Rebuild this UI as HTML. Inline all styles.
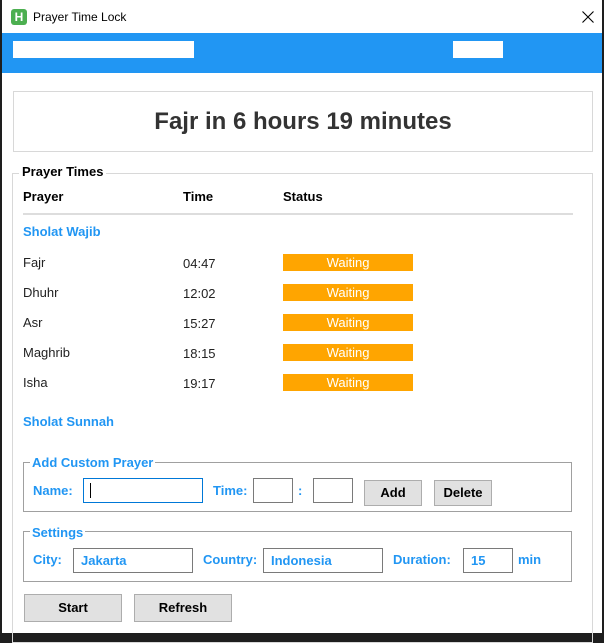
<!DOCTYPE html>
<html><head><style>
*{margin:0;padding:0;box-sizing:border-box}
body{width:604px;height:638px;background:#1e1e1e;position:relative;overflow:hidden;font-family:"Liberation Sans",sans-serif}
.a{position:absolute}
.win{left:2px;top:0;width:600px;height:633px;background:#fff}
.b{font-weight:bold}
.blue{color:#2196f3}
.w{background:#ffa500;color:#fff;font-size:13px;text-align:center;width:130px;height:17px;line-height:17px}
.row{font-size:13px;color:#222}
.gb{border:1px solid #a0a0a0}
.in{border:1px solid #7a7a7a;background:#fff;height:25px;font-size:13px;font-weight:bold;color:#2196f3;padding-left:7px;line-height:23px}
.btn{background:#e1e1e1;border:1px solid #adadad;font-size:13px;font-weight:bold;text-align:center;color:#000}
</style></head><body>
<div class="a win"></div>
<div class="a" style="left:11px;top:9px;width:16px;height:16px;background:#4caf50;border-radius:3px;color:#fff;font-size:12px;font-weight:bold;text-align:center;line-height:16px">H</div>
<div class="a" style="left:33px;top:10px;font-size:12px;color:#000">Prayer Time Lock</div>
<svg class="a" style="left:582px;top:11px" width="12" height="12"><path d="M0.5 0.5L11.5 11.5M11.5 0.5L0.5 11.5" stroke="#000" stroke-width="1.1"/></svg>
<div class="a" style="left:2px;top:33px;width:600px;height:40px;background:#2196f3"></div>
<div class="a" style="left:13px;top:41px;width:181px;height:17px;background:#fff"></div>
<div class="a" style="left:453px;top:41px;width:50px;height:17px;background:#fff"></div>
<div class="a" style="left:13px;top:91px;width:580px;height:61px;border:1px solid #d8d8d8;text-align:center;line-height:59px;font-size:24px;font-weight:bold;color:#333">Fajr in 6 hours 19 minutes</div>
<div class="a" style="left:12px;top:173px;width:581px;height:470px;border:1px solid #d8d8d8"></div>
<div class="a b" style="left:19px;top:164px;background:#fff;padding:0 3px;font-size:13px">Prayer Times</div>
<div class="a b" style="left:23px;top:189px;font-size:13px">Prayer</div>
<div class="a b" style="left:183px;top:189px;font-size:13px">Time</div>
<div class="a b" style="left:283px;top:189px;font-size:13px">Status</div>
<div class="a" style="left:23px;top:213px;width:550px;height:2px;background:#ddd"></div>
<div class="a b blue" style="left:23px;top:224px;font-size:13px">Sholat Wajib</div>
<div class="a row" style="left:23px;top:255px">Fajr</div><div class="a row" style="left:183px;top:256px">04:47</div><div class="a w" style="left:283px;top:254px">Waiting</div>
<div class="a row" style="left:23px;top:285px">Dhuhr</div><div class="a row" style="left:183px;top:286px">12:02</div><div class="a w" style="left:283px;top:284px">Waiting</div>
<div class="a row" style="left:23px;top:315px">Asr</div><div class="a row" style="left:183px;top:316px">15:27</div><div class="a w" style="left:283px;top:314px">Waiting</div>
<div class="a row" style="left:23px;top:345px">Maghrib</div><div class="a row" style="left:183px;top:346px">18:15</div><div class="a w" style="left:283px;top:344px">Waiting</div>
<div class="a row" style="left:23px;top:375px">Isha</div><div class="a row" style="left:183px;top:376px">19:17</div><div class="a w" style="left:283px;top:374px">Waiting</div>
<div class="a b blue" style="left:23px;top:414px;font-size:13px">Sholat Sunnah</div>
<div class="a gb" style="left:23px;top:462px;width:549px;height:50px"></div>
<div class="a b blue" style="left:30px;top:455px;background:#fff;padding:0 2px;font-size:13px">Add Custom Prayer</div>
<div class="a b blue" style="left:33px;top:483px;font-size:13px">Name:</div>
<div class="a" style="left:83px;top:478px;width:120px;height:25px;border:1px solid #0078d7"></div>
<div class="a" style="left:90px;top:483px;width:1px;height:15px;background:#000"></div>
<div class="a b blue" style="left:213px;top:483px;font-size:13px">Time:</div>
<div class="a in" style="left:253px;top:478px;width:40px"></div>
<div class="a b blue" style="left:298px;top:483px;font-size:13px">:</div>
<div class="a in" style="left:313px;top:478px;width:40px"></div>
<div class="a btn" style="left:364px;top:480px;width:58px;height:26px;line-height:24px">Add</div>
<div class="a btn" style="left:434px;top:480px;width:58px;height:26px;line-height:24px">Delete</div>
<div class="a gb" style="left:23px;top:531px;width:549px;height:51px"></div>
<div class="a b blue" style="left:30px;top:525px;background:#fff;padding:0 2px;font-size:13px">Settings</div>
<div class="a b blue" style="left:33px;top:552px;font-size:13px">City:</div>
<div class="a in" style="left:73px;top:548px;width:120px">Jakarta</div>
<div class="a b blue" style="left:203px;top:552px;font-size:13px">Country:</div>
<div class="a in" style="left:263px;top:548px;width:120px">Indonesia</div>
<div class="a b blue" style="left:393px;top:552px;font-size:13px">Duration:</div>
<div class="a in" style="left:463px;top:548px;width:50px">15</div>
<div class="a b blue" style="left:518px;top:552px;font-size:13px">min</div>
<div class="a btn" style="left:24px;top:594px;width:98px;height:28px;line-height:26px">Start</div>
<div class="a btn" style="left:134px;top:594px;width:98px;height:28px;line-height:26px">Refresh</div>
</body></html>
